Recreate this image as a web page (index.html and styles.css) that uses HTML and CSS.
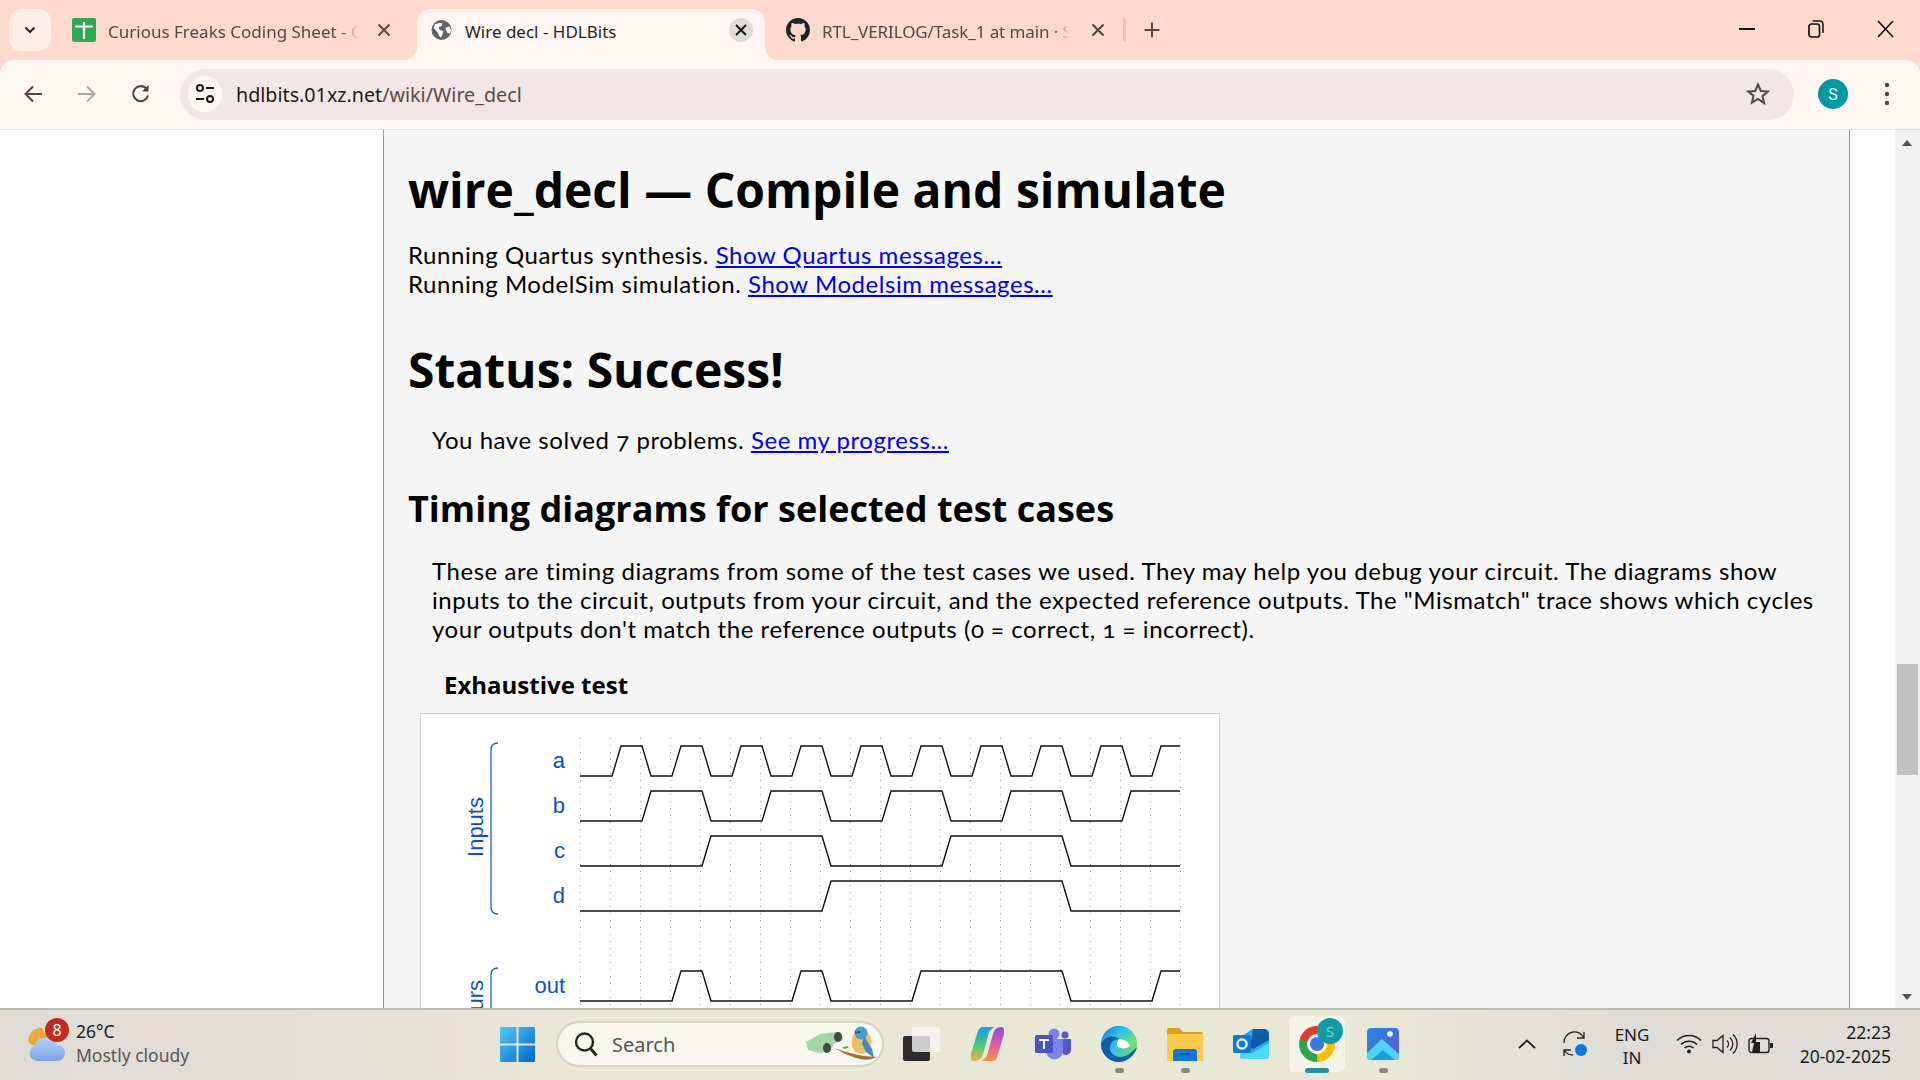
FILE: index.html
```html
<!DOCTYPE html>
<html lang="en">
<head>
<meta charset="UTF-8">
<title>Wire decl - HDLBits</title>
<link rel="stylesheet" href="styles.css">
</head>
<body>

<!-- Tab strip -->
<div class="tabstrip">
  <div class="tab-menu">
    <svg width="16" height="16" viewBox="0 0 16 16"><path d="M3.5 5.5 8 10l4.500-4.500" fill="none" stroke="#2b1d1a" stroke-width="2"/></svg>
  </div>
  <div class="tab tab-first">
    <svg class="tab-icon" width="24" height="24" viewBox="0 0 24 24"><rect width="24" height="24" rx="2" fill="#2fa84f"/><path d="M3 8.500h18M12 4v17" stroke="#fff" stroke-width="2.200"/></svg>
    <span class="tab-title tab-title-first">Curious Freaks Coding Sheet - G</span>
    <svg class="tab-close" width="16" height="16" viewBox="0 0 16 16"><path d="M2.500 2.500l11 11M13.500 2.500l-11 11" stroke="#5a4540" stroke-width="2"/></svg>
  </div>
  <div class="tab tab-active">
    <svg class="tab-icon" width="21" height="22" viewBox="0 0 22 22"><circle cx="11" cy="11" r="10.500" fill="#5f6368"/><path d="M4 5c3-1 6-2 8-1l-1 3-3 1 1 3 4 1-1 4-2 3c-2-2-2-4-3-5L3 9zM15 9l4-2 2 4-1 4-3-1z" fill="#fff6f3"/></svg>
    <span class="tab-title">Wire decl - HDLBits</span>
    <span class="tab-close-round">
      <svg width="14" height="14" viewBox="0 0 14 14"><path d="M2 2l10 10M12 2 2 12" stroke="#1f1715" stroke-width="2"/></svg>
    </span>
  </div>
  <div class="tab tab-third">
    <svg class="tab-icon" width="24" height="24" viewBox="0 0 16 16"><path fill="#1f2328" d="M8 0C3.580 0 0 3.580 0 8c0 3.540 2.290 6.530 5.470 7.590.4.070.55-.17.55-.38 0-.19-.01-.82-.01-1.490-2.010.37-2.530-.49-2.690-.94-.09-.23-.48-.94-.82-1.130-.28-.15-.68-.52-.01-.53.63-.01 1.080.58 1.230.82.72 1.210 1.870.87 2.330.66.07-.52.28-.87.51-1.070-1.780-.2-3.640-.89-3.640-3.950 0-.87.31-1.590.82-2.150-.08-.2-.36-1.020.08-2.120 0 0 .67-.21 2.200.82.64-.18 1.320-.27 2-.27.68 0 1.360.09 2 .27 1.530-1.040 2.200-.82 2.200-.82.44 1.100.16 1.920.08 2.120.51.56.82 1.270.82 2.150 0 3.070-1.870 3.750-3.650 3.950.29.25.54.73.54 1.480 0 1.070-.01 1.930-.01 2.200 0 .21.15.46.55.38A8.013 8.013 0 0 0 16 8c0-4.420-3.580-8-8-8z"/></svg>
    <span class="tab-title tab-title-third">RTL_VERILOG/Task_1 at main · S</span>
    <svg class="tab-close" width="16" height="16" viewBox="0 0 16 16"><path d="M2.500 2.500l11 11M13.500 2.500l-11 11" stroke="#5a4540" stroke-width="2"/></svg>
  </div>
  <div class="tab-sep"></div>
  <svg class="tab-plus" width="18" height="18" viewBox="0 0 18 18"><path d="M9 1.500v15M1.500 9h15" stroke="#5a4540" stroke-width="2"/></svg>

  <div class="win-controls">
    <svg width="16" height="16" viewBox="0 0 16 16"><path d="M0 8h16" stroke="#111" stroke-width="2"/></svg>
    <svg width="16" height="18" viewBox="0 0 16 18"><rect x="1" y="4" width="10.500" height="13" rx="2.500" fill="none" stroke="#111" stroke-width="1.700"/><path d="M4.500 1h7c2 0 3.500 1.500 3.500 3.500V13" fill="none" stroke="#111" stroke-width="1.500"/></svg>
    <svg width="17" height="18" viewBox="0 0 17 18"><path d="M1 1l15 16M16 1 1 17" stroke="#111" stroke-width="1.600"/></svg>
  </div>
</div>

<!-- Toolbar -->
<div class="toolbar">
  <div class="tool-btn"><svg width="20" height="20" viewBox="0 0 20 20"><path d="M19 10H2.500M10 2.500 2.500 10l7.500 7.500" fill="none" stroke="#5a4038" stroke-width="2"/></svg></div>
  <div class="tool-btn"><svg width="20" height="20" viewBox="0 0 20 20"><path d="M1 10h16.500M10 2.500l7.500 7.500-7.500 7.500" fill="none" stroke="#b3a5a1" stroke-width="2"/></svg></div>
  <div class="tool-btn"><svg width="20" height="20" viewBox="0 0 20 20"><path d="M17 11.500A7.500 7.500 0 1 1 15 4.300" fill="none" stroke="#5a4038" stroke-width="2.100"/><path d="M17.500 1v6.500H11" fill="#5a4038"/></svg></div>
  <div class="address">
    <div class="site-info">
      <svg width="20" height="22" viewBox="0 0 20 22"><circle cx="5" cy="5" r="3" fill="none" stroke="#1f1715" stroke-width="2"/><path d="M11 5h8M1 16h8" stroke="#1f1715" stroke-width="2"/><circle cx="15" cy="16" r="3" fill="none" stroke="#1f1715" stroke-width="2"/></svg>
    </div>
    <div class="url">hdlbits.01xz.net<span class="url-path">/wiki/Wire_decl</span></div>
    <svg class="star" width="24" height="24" viewBox="0 0 24 24"><path d="M12 2.500l2.800 6.500 7 .6-5.300 4.600 1.600 6.900L12 17l-6.100 3.600 1.600-6.900L2.200 9.600l7-.6z" fill="none" stroke="#54453f" stroke-width="2"/></svg>
  </div>
  <div class="tool-btn"><div class="avatar">S</div></div>
  <div class="tool-btn">
    <svg width="6" height="24" viewBox="0 0 6 24"><circle cx="3" cy="3" r="2.200" fill="#5a4038"/><circle cx="3" cy="12" r="2.200" fill="#5a4038"/><circle cx="3" cy="21" r="2.200" fill="#5a4038"/></svg>
  </div>
</div>

<!-- Page -->
<div class="viewport">
  <div class="side"></div>
  <div class="main">
    <h1 class="title">wire_decl — Compile and simulate</h1>
    <p class="run-lines">Running Quartus synthesis. <a href="#">Show Quartus messages...</a><br>
    Running ModelSim simulation. <a href="#">Show Modelsim messages...</a></p>

    <h1 class="status">Status: Success!</h1>
    <p class="indent solved">You have solved 7 problems. <a href="#">See my progress...</a></p>

    <h2>Timing diagrams for selected test cases</h2>
    <p class="indent about">These are timing diagrams from some of the test cases we used. They may help you debug your circuit. The diagrams show inputs to the circuit, outputs from your circuit, and the expected reference outputs. The "Mismatch" trace shows which cycles your outputs don't match the reference outputs (0 = correct, 1 = incorrect).</p>

    <h3>Exhaustive test</h3>
    <div class="wave-box">
      <svg class="wave" width="798" height="320" viewBox="421 714 798 320">
        <g class="grid">
          <path d="M580.500 738V1034M610.500 738V1034M640.500 738V1034M670.500 738V1034M700.500 738V1034M730.500 738V1034M760.500 738V1034"/>
          <path d="M790.500 738V1034M820.500 738V1034M850.500 738V1034M880.500 738V1034M910.500 738V1034M940.500 738V1034M970.500 738V1034"/>
          <path d="M1000.500 738V1034M1030.500 738V1034M1060.500 738V1034M1090.500 738V1034M1120.500 738V1034M1150.500 738V1034M1180.500 738V1034"/>
        </g>
        <g class="brace">
          <path d="M498 743Q491 743 491 750V907Q491 914 498 914"/>
          <path d="M498 968Q491 968 491 975V1034"/>
        </g>
        <g class="labels">
          <text x="565" y="768">a</text>
          <text x="565" y="813">b</text>
          <text x="565" y="858">c</text>
          <text x="565" y="903">d</text>
          <text x="565" y="993">out</text>
          <text class="group-label" transform="translate(483 827) rotate(-90)">Inputs</text>
          <text class="group-end" transform="translate(483 980) rotate(-90)">Yours</text>
        </g>
        <g class="traces">
          <polyline points="580,776 612,776 621,746 642,746 651,776 672,776 681,746 702,746 711,776 732,776 741,746 762,746 771,776 792,776 801,746 822,746 831,776 852,776 861,746 882,746 891,776 912,776 921,746 942,746 951,776 972,776 981,746 1002,746 1011,776 1032,776 1041,746 1062,746 1071,776 1092,776 1101,746 1122,746 1131,776 1152,776 1161,746 1180,746"/>
          <polyline points="580,821 642,821 651,791 702,791 711,821 762,821 771,791 822,791 831,821 882,821 891,791 942,791 951,821 1002,821 1011,791 1062,791 1071,821 1122,821 1131,791 1180,791"/>
          <polyline points="580,866 702,866 711,836 822,836 831,866 942,866 951,836 1062,836 1071,866 1180,866"/>
          <polyline points="580,911 822,911 831,881 1062,881 1071,911 1180,911"/>
          <polyline points="580,1001 672,1001 681,971 702,971 711,1001 792,1001 801,971 822,971 831,1001 912,1001 921,971 1062,971 1071,1001 1152,1001 1161,971 1180,971"/>
        </g>
      </svg>
    </div>
  </div>
  <div class="gutter"></div>
  <div class="scrollbar">
    <div class="arrow-up"></div>
    <div class="thumb"></div>
    <div class="arrow-down"></div>
  </div>
</div>

<!-- Taskbar -->
<div class="taskbar">
  <div class="weather">
    <div class="weather-icon">
      <svg width="38" height="36" viewBox="0 0 38 36">
        <defs><linearGradient id="cloudFill" x1="0" y1="0" x2="0" y2="1"><stop offset="0" stop-color="#b5d3f5"/><stop offset="1" stop-color="#7aa3e6"/></linearGradient></defs>
        <path d="M14 2A12 12 0 0 0 1 17l7 4 12-8z" fill="#f0a63a"/>
        <path d="M9 35a8 8 0 0 1-2-15.500A9 9 0 0 1 18 12a10 10 0 0 1 11 7 8 8 0 0 1 0 16z" fill="url(#cloudFill)"/>
      </svg>
      <span class="weather-badge">8</span>
    </div>
    <div class="weather-text">
      <div class="temp">26°C</div>
      <div class="sky">Mostly cloudy</div>
    </div>
  </div>

  <div class="slot">
    <svg width="35" height="35" viewBox="0 0 35 35">
      <defs><linearGradient id="winFill" x1="0" y1="0" x2="1" y2="1"><stop offset="0" stop-color="#52c7f8"/><stop offset="1" stop-color="#0069c4"/></linearGradient></defs>
      <path d="M0 1a1 1 0 0 1 1-1h15.500v16.500H0zM18.500 0H34a1 1 0 0 1 1 1v15.500H18.500zM0 18.500h16.500V35H1a1 1 0 0 1-1-1zM18.500 18.500H35V34a1 1 0 0 1-1 1H18.500z" fill="url(#winFill)"/>
    </svg>
  </div>

  <div class="search">
    <svg width="24" height="26" viewBox="0 0 24 26"><circle cx="10.500" cy="11" r="8.500" fill="none" stroke="#222" stroke-width="2.400"/><path d="M16.500 17.500l6 7" stroke="#222" stroke-width="2.800"/></svg>
    <span class="search-text">Search</span>
    <svg class="search-art" width="72" height="36" viewBox="0 0 72 36">
      <path d="M0 18 14 10 30 8 36 10 37 16 28 20 24 28 12 29 2 26z" fill="#a5d6a7"/>
      <ellipse cx="32" cy="13" rx="4" ry="5" fill="#3f4d44"/>
      <ellipse cx="21" cy="24" rx="4" ry="5" fill="#3f4d44"/>
      <path d="M28 24Q45 30 58 32L71 33Q62 38 50 34Q38 30 28 24z" fill="#a86b3a"/>
      <path d="M36 24q4-3 7-1q-3 3-7 1z" fill="#4caf2f"/>
      <ellipse cx="55.500" cy="18" rx="10" ry="12" fill="#eec264"/>
      <circle cx="55" cy="9" r="6.500" fill="#4d9bd6"/>
      <path d="M58 12 66 25 68 34 60 28 56 20z" fill="#3f8fd0"/>
      <path d="M49 6l3 3-3 1z" fill="#555"/>
      <circle cx="53" cy="8" r="1" fill="#222"/>
    </svg>
  </div>

  <div class="apps">
    <div class="slot">
      <svg width="37" height="34" viewBox="0 0 37 34"><rect y="9" width="27" height="25" rx="2" fill="#2c2c2c"/><rect x="9" width="28" height="25" rx="2" fill="#f5f5f5" fill-opacity=".8"/></svg>
    </div>
    <div class="slot">
      <svg width="33" height="34" viewBox="0 0 33 34">
        <defs>
          <linearGradient id="copA" x1="0" y1="0" x2="0" y2="1"><stop offset="0" stop-color="#1f9be8"/><stop offset=".55" stop-color="#48c87a"/><stop offset="1" stop-color="#f5b23c"/></linearGradient>
          <linearGradient id="copB" x1="0" y1="0" x2="0" y2="1"><stop offset="0" stop-color="#7b55dc"/><stop offset=".55" stop-color="#e85aa0"/><stop offset="1" stop-color="#f9973c"/></linearGradient>
        </defs>
        <path d="M12 0H24C20 1 18 5 17 9L12 27C11 31 8 34 4 34H3C0 34-1 30 0 27L6 7C7 3 9 0 12 0Z" fill="url(#copA)"/>
        <path d="M22 34H10C14 33 16 29 17 25L22 7C23 3 26 0 30 0C33 0 34 4 33 7L27 27C26 31 25 34 22 34Z" fill="url(#copB)"/>
      </svg>
    </div>
    <div class="slot">
      <svg width="36" height="32" viewBox="0 0 36 32">
        <circle cx="19" cy="6" r="5.500" fill="#7b83eb"/>
        <circle cx="30" cy="7" r="3.500" fill="#5059c9"/>
        <path d="M25 11h11v11a5 5 0 0 1-10 0z" fill="#5059c9"/>
        <path d="M11 11h17v12a8.500 8.500 0 0 1-17 0z" fill="#7b83eb"/>
        <rect y="7" width="18" height="18" rx="1.500" fill="#4b53bc"/>
        <path d="M4 11h10v2h-4v8H8v-8H4z" fill="#fff"/>
      </svg>
    </div>
    <div class="slot">
      <svg width="36" height="36" viewBox="0 0 36 36">
        <defs><linearGradient id="edgeFill" x1="0" y1="0" x2="1" y2=".6"><stop offset="0" stop-color="#1173bf"/><stop offset=".55" stop-color="#35c1f1"/><stop offset="1" stop-color="#6fe06b"/></linearGradient></defs>
        <circle cx="18" cy="18" r="18" fill="url(#edgeFill)"/>
        <path d="M36 21c-2 8-10 15-18 15C8 36 0 28 0 18c3-8 13-10 18-5-5 0-9 3-9 9 0 6 7 11 15 8 6-2 8-6 12-9z" fill="#0f5fa8"/>
        <path d="M18 13c6 0 10 3 11 7-3 3-9 3-12 1-2-2-1-5 1-8z" fill="#fff"/>
        <path d="M36 19c-3 1-6 2-7 1 0-5-5-8-11-7-5-5-15-3-18 5C1 8 9 0 18 0c10 0 18 8 18 19z" fill="url(#edgeFill)"/>
      </svg>
      <span class="run-dot"></span>
    </div>
    <div class="slot">
      <svg width="36" height="33" viewBox="0 0 36 33">
        <path d="M0 2a2 2 0 0 1 2-2h10l4 4h18a2 2 0 0 1 2 2v6H0z" fill="#d9a316"/>
        <path d="M0 6h36v27H0z" fill="#fdcb4c"/>
        <path d="M6 24a3 3 0 0 1 3-3h18a3 3 0 0 1 3 3v9H6z" fill="#0f78d4"/>
        <path d="M13 26h10" stroke="#0a4f8f" stroke-width="1.500"/>
      </svg>
      <span class="run-dot"></span>
    </div>
    <div class="slot">
      <svg width="36" height="30" viewBox="0 0 36 30">
        <path d="M7 19V9L19 0h13a4 4 0 0 1 4 4v23a3 3 0 0 1-3 3H10a3 3 0 0 1-3-3z" fill="#29a7e8"/>
        <path d="M20 0h12l4 4v7L20 20l-3-2z" fill="#0f5cab"/>
        <path d="M7 21l12 3 17-10v13a3 3 0 0 1-3 3H10a3 3 0 0 1-3-3z" fill="#50d9ff"/>
        <rect y="6" width="18" height="18" rx="1.500" fill="#0f78d4"/>
        <circle cx="9" cy="15" r="4.600" fill="none" stroke="#fff" stroke-width="2.200"/>
      </svg>
    </div>
    <div class="slot slot-active">
      <div class="chrome"><div class="chrome-eye"></div></div>
      <span class="chrome-badge">S</span>
      <span class="run-bar"></span>
    </div>
    <div class="slot">
      <svg width="32" height="32" viewBox="0 0 32 32">
        <defs><linearGradient id="photoFill" x1="0" y1="0" x2="1" y2="1"><stop offset="0" stop-color="#1f8ee0"/><stop offset="1" stop-color="#6a4fd0"/></linearGradient></defs>
        <rect width="32" height="32" rx="4" fill="url(#photoFill)"/>
        <circle cx="23" cy="6" r="2.800" fill="#fff"/>
        <path d="M0 25l15-14 17 15v2a4 4 0 0 1-4 4H4a4 4 0 0 1-4-4z" fill="#4fd2f7"/>
        <path d="M4 32l12-10 12 10z" fill="#1b9ee0"/>
      </svg>
      <span class="run-dot"></span>
    </div>
  </div>

  <div class="tray">
    <svg class="tray-chevron" width="18" height="10" viewBox="0 0 18 10"><path d="M1 9l8-7.500L17 9" fill="none" stroke="#222" stroke-width="1.800"/></svg>
    <svg class="tray-sync" width="26" height="26" viewBox="0 0 26 26">
      <path d="M2 12A10.500 10.500 0 0 1 22 7M22 1v6h-7M2 25v-6h7M2 19a10.500 10.500 0 0 0 9 5" fill="none" stroke="#222" stroke-width="1.300"/>
      <circle cx="19" cy="19" r="6" fill="#0f78d4"/>
    </svg>
    <div class="lang"><div>ENG</div><div>IN</div></div>
    <svg class="tray-wifi" width="26" height="20" viewBox="0 0 26 20"><path d="M1 6.500a17 17 0 0 1 24 0M5 10.500a11.500 11.500 0 0 1 16 0M8.500 14a6.500 6.500 0 0 1 9 0" fill="none" stroke="#222" stroke-width="1.500"/><circle cx="13" cy="17.500" r="2" fill="#222"/></svg>
    <svg class="tray-vol" width="26" height="22" viewBox="0 0 26 22"><path d="M1 7.500h4L11 2.500v17l-6-5H1z" fill="none" stroke="#222" stroke-width="1.300"/><path d="M15 7.500a5 5 0 0 1 0 7M18 4.500a9 9 0 0 1 0 13M21 1.500a13 13 0 0 1 0 19" fill="none" stroke="#222" stroke-width="1.300"/></svg>
    <svg class="tray-batt" width="26" height="22" viewBox="0 0 26 22"><rect x="1" y="5.500" width="20" height="14" rx="2.500" fill="none" stroke="#222" stroke-width="1.400"/><path d="M22 10h3v5h-3z" fill="#222"/><path d="M8 0 3 10h3l-2 9h8V9H8z" fill="#222"/></svg>
    <div class="clock"><div>22:23</div><div>20-02-2025</div></div>
  </div>
</div>

</body>
</html>
```

FILE: styles.css
```css
* {
  box-sizing: border-box;
}

html, body {
  margin: 0;
  padding: 0;
  height: 100%;
  overflow: hidden;
}

body {
  width: 1920px;
  height: 1080px;
  display: flex;
  flex-direction: column;
  font-family: "Noto Sans", sans-serif;
  background-color: #ffd9cc;
}

/* Tab strip */
.tabstrip {
  height: 60px;
  flex: none;
  display: flex;
  align-items: flex-start;
  padding: 9px 0 0 9px;
  background-color: #ffd9cc;
}

.tab-menu {
  width: 42px;
  height: 42px;
  display: flex;
  align-items: center;
  justify-content: center;
  background-color: #ffeee8;
  border-radius: 13px;
}

.tab {
  height: 51px;
  display: flex;
  align-items: center;
  padding-bottom: 9px;
  flex: none;
}

.tab-first {
  width: 366px;
  padding-left: 21px;
}

.tab-active {
  position: relative;
  width: 348px;
  padding-left: 14px;
  padding-right: 12px;
  background-color: #fff6f3;
  border-radius: 14px 14px 0 0;
}

.tab-active::before,
.tab-active::after {
  content: "";
  position: absolute;
  bottom: 0;
  width: 14px;
  height: 14px;
}

.tab-active::before {
  left: -14px;
  background: radial-gradient(circle at 0 0, transparent 14px, #fff6f3 14.500px);
}

.tab-active::after {
  right: -14px;
  background: radial-gradient(circle at 100% 0, transparent 14px, #fff6f3 14.500px);
}

.tab-third {
  width: 341px;
  padding-left: 21px;
}

.tab-icon {
  flex: none;
}

.tab-title {
  font-size: 17px;
  color: #2b1d1a;
  white-space: nowrap;
  margin-top: 2px;
  margin-left: 13px;
  flex: 1;
}

.tab-title-first,
.tab-title-third {
  color: #5a4540;
  margin-left: 12px;
  flex: none;
}

.tab-title-first {
  width: 251px;
  -webkit-mask-image: linear-gradient(to right, #000 92%, transparent 100%);
  mask-image: linear-gradient(to right, #000 92%, transparent 100%);
}

.tab-title-third {
  width: 248px;
  letter-spacing: -.1px;
  -webkit-mask-image: linear-gradient(to right, #000 93%, rgba(0, 0, 0, .3) 98%, transparent 100%);
  mask-image: linear-gradient(to right, #000 93%, rgba(0, 0, 0, .3) 98%, transparent 100%);
}

.tab-close {
  flex: none;
  margin-left: 17px;
}

.tab-third .tab-close {
  margin-left: 20px;
}

.tab-close-round {
  width: 24px;
  height: 24px;
  display: flex;
  align-items: center;
  justify-content: center;
  background-color: #dfdbd8;
  border-radius: 50%;
}

.tab-sep {
  width: 3px;
  height: 24px;
  margin-top: 9px;
  margin-left: 17px;
  background-color: #ffb8a5;
  border-radius: 2px;
  flex: none;
}

.tab-plus {
  flex: none;
  margin: 12px 0 0 17px;
}

.win-controls {
  margin-left: auto;
  width: 208px;
  height: 40px;
  margin-top: 0;
  padding-right: 26px;
  padding-left: 27px;
  display: flex;
  align-items: center;
  justify-content: space-between;
}

/* Toolbar */
.toolbar {
  height: 70px;
  flex: none;
  display: flex;
  align-items: center;
  padding: 0 0 1px 6px;
  background-color: #fff6f3;
  border-bottom: 1px solid #f2dcd6;
  border-radius: 14px 14px 0 0;
}

.tool-btn {
  width: 54px;
  height: 40px;
  flex: none;
  display: flex;
  align-items: center;
  justify-content: center;
}

.address {
  width: 1614px;
  height: 51px;
  margin: 0 12px;
  padding: 0 16px 0 8px;
  display: flex;
  align-items: center;
  background-color: #f2e7e6;
  border-radius: 26px;
}

.site-info {
  width: 34px;
  height: 36px;
  flex: none;
  display: flex;
  align-items: center;
  justify-content: center;
  background-color: #fff6f3;
  border-radius: 50%;
}

.url {
  margin-left: 14px;
  font-size: 19.700px;
  color: #1f1715;
  flex: 1;
}

.url-path {
  color: #5c4a45;
}

.star {
  flex: none;
  margin-right: 8px;
}

.avatar {
  width: 30px;
  height: 30px;
  border-radius: 50%;
  background-color: #0097a7;
  color: #fff;
  font-family: Roboto, sans-serif;
  font-size: 16px;
  display: flex;
  align-items: center;
  justify-content: center;
}

/* Page */
.viewport {
  height: 878px;
  flex: none;
  display: flex;
  overflow: hidden;
  background-color: #fff;
}

.side {
  width: 383px;
  flex: none;
}

.main {
  width: 1467px;
  flex: none;
  padding: 30px 24px 0;
  background-color: #f5f5f5;
  border-left: 1px solid #999;
  border-right: 1px solid #999;
  font-family: Lato, sans-serif;
  font-size: 24px;
  letter-spacing: .55px;
  line-height: 29px;
  color: #000;
  font-variant-numeric: oldstyle-nums;
}

.gutter {
  width: 45px;
  flex: none;
}

h1, h2, h3 {
  font-family: "Open Sans", sans-serif;
  font-weight: 700;
  letter-spacing: 0;
  margin: 0;
}

h1 {
  font-size: 48px;
  line-height: 60px;
}

h2 {
  font-size: 36px;
  line-height: 44px;
  margin-top: 33px;
}

h3 {
  font-size: 24px;
  line-height: 30px;
  margin-top: 27px;
  margin-left: 36px;
}

p {
  margin: 0;
}

a {
  color: #00e;
}

.run-lines {
  margin-top: 20px;
}

.status {
  margin-top: 42px;
}

.indent {
  margin-left: 24px;
}

.solved {
  margin-top: 25px;
}

.about {
  margin-top: 25px;
}

/* Timing diagram */
.wave-box {
  width: 800px;
  height: 340px;
  margin: 13px 0 0 12px;
  background-color: #fff;
  border: 1px solid #ccc;
}

.wave {
  display: block;
}

.grid path {
  fill: none;
  stroke: #999;
  stroke-width: 1;
  stroke-dasharray: 1 6;
}

.brace path {
  fill: none;
  stroke: #1a5fd0;
  stroke-width: 1.300;
}

.labels text {
  font-family: "Liberation Sans", sans-serif;
  font-size: 22px;
  letter-spacing: 0;
  fill: #0b4fc4;
  text-anchor: end;
}

.labels .group-label {
  text-anchor: middle;
}

.traces polyline {
  fill: none;
  stroke: #111;
  stroke-width: 1.400;
}

/* Scrollbar */
.scrollbar {
  width: 25px;
  flex: none;
  position: relative;
  background-color: #f1f1f1;
}

.thumb {
  position: absolute;
  top: 534px;
  left: 2px;
  width: 21px;
  height: 111px;
  background-color: #c1c1c1;
}

.arrow-up,
.arrow-down {
  position: absolute;
  left: 7px;
  width: 0;
  height: 0;
  border-left: 5.500px solid transparent;
  border-right: 5.500px solid transparent;
}

.arrow-up {
  top: 10px;
  border-bottom: 6px solid #505050;
}

.arrow-down {
  bottom: 8px;
  border-top: 6px solid #505050;
}

/* Taskbar */
.taskbar {
  height: 72px;
  flex: none;
  display: flex;
  align-items: center;
  padding-bottom: 2px;
  border-top: 2px solid #bdbcb2;
  background: linear-gradient(to right, #e0dcd7 0%, #e2dfd6 15%, #e9e7d5 30%, #e9e7d5 72%, #e0ddd8 84%, #e0ddd8 100%);
}

.weather {
  width: 484px;
  flex: none;
  display: flex;
  align-items: center;
  padding-left: 28px;
}

.weather-icon {
  width: 48px;
  height: 36px;
  position: relative;
  flex: none;
}

.weather-badge {
  position: absolute;
  top: -8px;
  left: 17px;
  width: 24px;
  height: 24px;
  border-radius: 50%;
  background-color: #c42b1c;
  color: #fff;
  font-size: 16px;
  line-height: 24px;
  text-align: center;
}

.weather-text {
  margin-top: -2px;
  font-size: 17.500px;
  line-height: 24px;
}

.temp {
  color: #1b1b1b;
}

.sky {
  color: #555;
}

.slot {
  width: 66px;
  height: 70px;
  flex: none;
  position: relative;
  display: flex;
  align-items: center;
  justify-content: center;
}

.search {
  width: 328px;
  height: 46px;
  margin: 0 4px 0 6px;
  padding: 0 4px 0 16px;
  flex: none;
  display: flex;
  align-items: center;
  background-color: #f8f7ee;
  border: 2px solid #d6d4c3;
  border-radius: 23px;
}

.search-text {
  margin-left: 14px;
  font-size: 20px;
  color: #555;
  flex: 1;
}

.search-art {
  flex: none;
  margin-top: -4px;
}

.apps {
  display: flex;
  flex: none;
}

.slot-active::before {
  content: "";
  position: absolute;
  top: 7px;
  left: 5px;
  width: 56px;
  height: 56px;
  background-color: #f5f3e8;
  border-radius: 6px;
}

.chrome {
  position: relative;
  width: 36px;
  height: 36px;
  border-radius: 50%;
  background: conic-gradient(from -75deg, #e33b2e 0 135deg, #fbbc04 135deg 255deg, #2fa34f 255deg 360deg);
  display: flex;
  align-items: center;
  justify-content: center;
}

.chrome-eye {
  width: 20px;
  height: 20px;
  border-radius: 50%;
  background-color: #3b78e7;
  border: 3px solid #fff;
}

.chrome-badge {
  position: absolute;
  top: 9px;
  left: 33px;
  width: 26px;
  height: 26px;
  border-radius: 50%;
  background-color: #0f9aa5;
  color: #7ccdd3;
  font-size: 15px;
  line-height: 26px;
  text-align: center;
}

.run-dot,
.run-bar {
  position: absolute;
  bottom: 6px;
  height: 5px;
  border-radius: 3px;
}

.run-dot {
  left: 29px;
  width: 9px;
  background-color: #8a887c;
}

.run-bar {
  left: 21px;
  width: 24px;
  background-color: #2a8ea5;
}

/* System tray */
.tray {
  margin-left: auto;
  width: 402px;
  height: 70px;
  flex: none;
  display: flex;
  align-items: center;
  color: #1b1b1b;
}

.tray-chevron {
  flex: none;
}

.tray-sync {
  flex: none;
  margin-left: 26px;
}

.lang {
  width: 56px;
  margin-left: 16px;
  padding-top: 3px;
  font-size: 17px;
  line-height: 23px;
  text-align: center;
  flex: none;
}

.tray-wifi {
  flex: none;
  margin-left: 16px;
}

.tray-vol {
  flex: none;
  margin-left: 10px;
}

.tray-batt {
  flex: none;
  margin-left: 10px;
}

.clock {
  margin-left: auto;
  margin-right: 29px;
  font-size: 17.500px;
  line-height: 24px;
  text-align: right;
  white-space: nowrap;
}
```
